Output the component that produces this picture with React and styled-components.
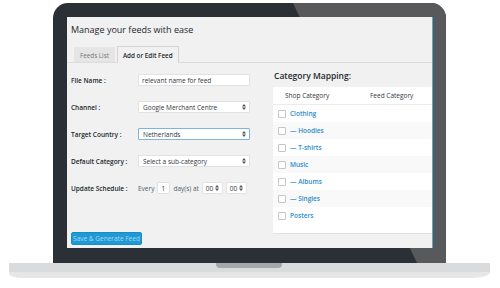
import React from "react";
import styled, { createGlobalStyle } from "styled-components";

const Global = createGlobalStyle`
  html, body { margin: 0; padding: 0; background: #ffffff; }
  body { width: 500px; height: 288px; overflow: hidden; font-family: "Open Sans", "Liberation Sans", sans-serif; }
  * { box-sizing: border-box; }
`;

const Laptop = styled.div`
  width: 500px;
  height: 288px;
  padding-top: 3px;
  display: flex;
  flex-direction: column;
`;

const Bezel = styled.div`
  position: relative;
  margin-left: 53px;
  width: 393px;
  height: 260px;
  padding: 14px 13px 15px 14px;
  background: #2b3037;
  border-radius: 15px 15px 0 0;
  overflow: hidden;
  &::before {
    content: "";
    position: absolute;
    inset: 0;
    background: #58595b;
    clip-path: polygon(240px 0, 100% 0, 100% 100%, 364px 100%);
  }
`;

const Base = styled.div`
  position: relative;
  margin-left: 9px;
  width: 481px;
  height: 15px;
  background: linear-gradient(#dadbdd 0, #dadbdd 9px, #e6e6e7 9px);
  border-radius: 0 0 18px 12px / 0 0 6px 5px;
`;

const Notch = styled.div`
  position: absolute;
  left: 207px;
  top: 0;
  width: 66px;
  height: 5px;
  background: #a6a7a9;
  border-radius: 0 0 4px 4px;
`;

const Screen = styled.div`
  position: relative;
  width: 366px;
  height: 231px;
  background: #f1f1f1;
  border-right: 1px solid #5aa6d6;
  display: flex;
  flex-direction: column;
  color: #23282d;
`;

const Title = styled.div`
  font-size: 9px;
  line-height: 12px;
  padding: 7px 0 0 4px;
  height: 28px;
`;

const TabBar = styled.div`
  display: flex;
  align-items: flex-end;
  gap: 2px;
  padding-left: 7px;
  height: 18px;
  border-bottom: 1px solid #dcdcdc;
`;

const Tab = styled.div`
  font-size: 6.3px;
  font-weight: ${p => (p.$active ? 600 : 400)};
  color: ${p => (p.$active ? "#23282d" : "#72777c")};
  background: ${p => (p.$active ? "#f1f1f1" : "#e5e5e5")};
  border: 1px solid ${p => (p.$active ? "#d4d4d4" : "#e5e5e5")};
  border-bottom: none;
  height: ${p => (p.$active ? "17px" : "15px")};
  margin-bottom: ${p => (p.$active ? "-1px" : "0")};
  padding: 0 5px;
  display: flex;
  align-items: center;
`;

const Body = styled.div`
  flex: 1;
  display: flex;
`;

const FormCol = styled.div`
  width: 206px;
  padding: 11px 0 3px 4px;
  display: flex;
  flex-direction: column;
`;

const Row = styled.div`
  display: flex;
  align-items: center;
  height: 12px;
  margin-bottom: 15px;
`;

const Label = styled.div`
  width: 67px;
  font-size: 6.5px;
  font-weight: 600;
  color: #23282d;
`;

const Field = styled.div`
  width: ${p => p.$w || 112}px;
  height: 12px;
  background: #ffffff;
  border: 1px solid ${p => (p.$focus ? "#7cb4e2" : "#e2e2e2")};
  border-radius: 1px;
  font-size: 6.5px;
  color: #32373c;
  display: flex;
  align-items: center;
  justify-content: space-between;
  padding: 0 3px 0 ${p => p.$pl || 3}px;
  white-space: nowrap;
`;

const Inline = styled.div`
  display: flex;
  align-items: center;
  gap: ${p => p.$gap || 3}px;
  font-size: 6.5px;
  color: #555d66;
`;

const Button = styled.div`
  margin-top: auto;
  width: 71px;
  height: 13px;
  background: #1f9ad7;
  border: 1px solid #1a8cc5;
  border-radius: 2px;
  color: #a3d6f1;
  font-size: 6.5px;
  display: flex;
  align-items: center;
  justify-content: center;
`;

const MapCol = styled.div`
  flex: 1;
  display: flex;
  flex-direction: column;
  padding-top: 7px;
`;

const MapTitle = styled.div`
  font-size: 8.5px;
  font-weight: 600;
  line-height: 12px;
  padding-left: 1px;
  height: 17px;
`;

const Table = styled.div`
  background: #ffffff;
  border-bottom: 1px solid #e2e2e2;
  padding-bottom: 9px;
`;

const Head = styled.div`
  display: flex;
  align-items: center;
  height: 18px;
  border-bottom: 1px solid #ececec;
  font-size: 6.5px;
  color: #32373c;
`;

const HeadCell = styled.div`
  width: ${p => p.$w}px;
  padding-left: ${p => p.$pl || 0}px;
`;

const TRow = styled.div`
  display: flex;
  align-items: center;
  height: 17px;
  padding-left: 5px;
  gap: 4px;
  background: ${p => (p.$alt ? "#f9f9f9" : "#ffffff")};
`;

const Check = styled.span`
  width: 8px;
  height: 8px;
  background: #ffffff;
  border: 1px solid #c6c6c6;
  border-radius: 1px;
`;

const Link = styled.span`
  font-size: 6.5px;
  font-weight: 600;
  color: #2a8bcb;
`;

const Arrows = () => (
  <svg width="4" height="6" viewBox="0 0 4 6">
    <path d="M2 0 L4 2.4 H0 Z M2 6 L4 3.6 H0 Z" fill="#555" />
  </svg>
);

const cats = ["Clothing", "— Hoodies", "— T-shirts", "Music", "— Albums", "— Singles", "Posters"];

export default function App() {
  return (
    <>
      <Global />
      <Laptop>
        <Bezel>
          <Screen>
            <Title>Manage your feeds with ease</Title>
            <TabBar>
              <Tab>Feeds List</Tab>
              <Tab $active>Add or Edit Feed</Tab>
            </TabBar>
            <Body>
              <FormCol>
                <Row>
                  <Label>File Name :</Label>
                  <Field>relevant name for feed</Field>
                </Row>
                <Row>
                  <Label>Channel :</Label>
                  <Field $pl={4}>Google Merchant Centre<Arrows /></Field>
                </Row>
                <Row>
                  <Label>Target Country :</Label>
                  <Field $focus $pl={4}>Netherlands<Arrows /></Field>
                </Row>
                <Row>
                  <Label>Default Category :</Label>
                  <Field $pl={4}>Select a sub-category<Arrows /></Field>
                </Row>
                <Row>
                  <Label>Update Schedule :</Label>
                  <Inline $gap={3}>
                    <span>Every</span>
                    <Field $w={13}>1</Field>
                    <span>day(s) at</span>
                    <Field $w={21}>00<Arrows /></Field>
                    <Field $w={21}>00<Arrows /></Field>
                  </Inline>
                </Row>
                <Button>Save &amp; Generate Feed</Button>
              </FormCol>
              <MapCol>
                <MapTitle>Category Mapping:</MapTitle>
                <Table>
                  <Head>
                    <HeadCell $w={97} $pl={12}>Shop Category</HeadCell>
                    <HeadCell $w={60}>Feed Category</HeadCell>
                  </Head>
                  {cats.map((c, i) => (
                    <TRow key={c} $alt={i % 2 === 1}>
                      <Check />
                      <Link>{c}</Link>
                    </TRow>
                  ))}
                </Table>
              </MapCol>
            </Body>
          </Screen>
        </Bezel>
        <Base>
          <Notch />
        </Base>
      </Laptop>
    </>
  );
}
